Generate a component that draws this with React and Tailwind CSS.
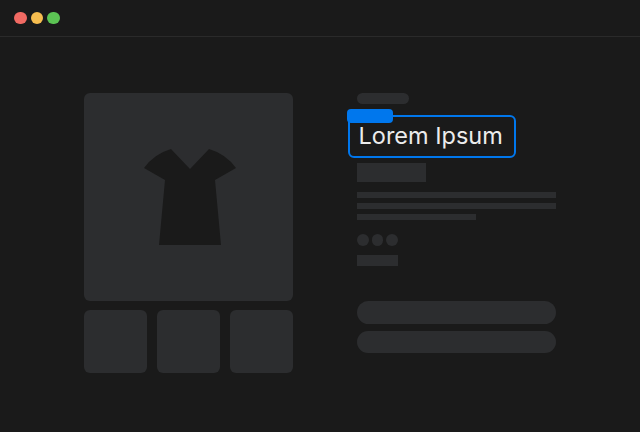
import React from 'react';

const block = 'bg-[#2c2d2f]';

function Shirt() {
    return (
        <svg className="ml-[2px]" width="92" height="96" viewBox="0 0 92 96" fill="#1a1a1a">
            <path d="M27 0 L46 20 L65 0 Q82 5 92 19 L71 31 L77 96 L15 96 L21 31 L0 19 Q10 5 27 0 Z" />
        </svg>
    );
}

export default function App() {
    return (
        <div className="w-[640px] h-[432px] overflow-hidden bg-[#1a1a1a] [font-family:Inter,sans-serif]">
            <div className="h-[37px] flex items-center gap-1 pl-[14px] border-b border-[#2a2a2a]">
                <span className="w-[12.5px] h-[12.5px] rounded-full bg-[#f16a63]" />
                <span className="w-[12.5px] h-[12.5px] rounded-full bg-[#f6bd4f]" />
                <span className="w-[12.5px] h-[12.5px] rounded-full bg-[#5cc454]" />
            </div>

            <div className="flex pl-[84px] pt-[56px]">
                <div className="w-[209px]">
                    <div className={`h-[208px] rounded-md flex items-center justify-center ${block}`}>
                        <Shirt />
                    </div>
                    <div className="flex gap-[9.7px] mt-[9px]">
                        <div className={`w-[63.3px] h-[63px] rounded-md ${block}`} />
                        <div className={`w-[63.3px] h-[63px] rounded-md ${block}`} />
                        <div className={`w-[63.3px] h-[63px] rounded-md ${block}`} />
                    </div>
                </div>

                <div className="w-[199px] ml-[64px]">
                    <div className={`w-[52px] h-[11px] rounded-full ${block}`} />

                    <div className="relative -ml-[9px] mt-[11px] w-[168px] h-[43px] flex items-center pl-[8.5px] border-2 border-[#0077ed] rounded-md">
                        <span className="absolute -left-[2.7px] -top-[7.7px] w-[45.4px] h-[13.4px] rounded-sm bg-[#0077ed]" />
                        <span className="text-[23.5px] leading-none mb-[2px] text-[#ececec]">Lorem Ipsum</span>
                    </div>

                    <div className={`w-[69px] h-[19px] mt-[5px] ${block}`} />

                    <div className={`w-[199px] h-[6px] mt-[10px] ${block}`} />
                    <div className={`w-[199px] h-[6px] mt-[5px] ${block}`} />
                    <div className={`w-[119px] h-[6px] mt-[5px] ${block}`} />

                    <div className="flex gap-[3px] mt-[14px]">
                        <span className={`w-[11.5px] h-[11.5px] rounded-full ${block}`} />
                        <span className={`w-[11.5px] h-[11.5px] rounded-full ${block}`} />
                        <span className={`w-[11.5px] h-[11.5px] rounded-full ${block}`} />
                    </div>

                    <div className={`w-[41px] h-[11.5px] mt-[9px] ${block}`} />

                    <div className={`h-[22.5px] rounded-full mt-[35px] ${block}`} />
                    <div className={`h-[22.5px] rounded-full mt-[7px] ${block}`} />
                </div>
            </div>
        </div>
    );
}
